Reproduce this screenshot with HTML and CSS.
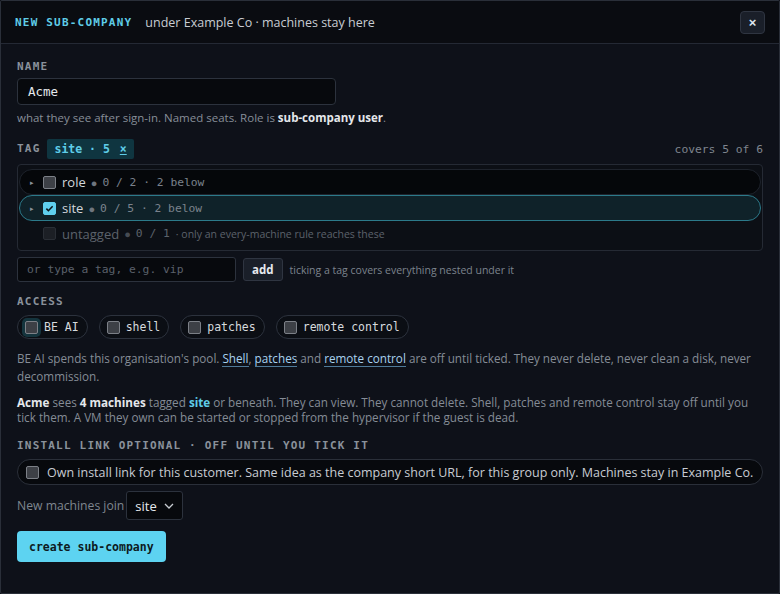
FILE: index.html
```html
<!DOCTYPE html>
<html lang="en">
<head>
  <meta charset="UTF-8">
  <title>New sub-company</title>
  <link rel="stylesheet" href="styles.css">
</head>
<body>
  <div class="modal">
    <div class="modal-head">
      <span class="modal-title">NEW SUB-COMPANY</span>
      <span class="modal-sub">under Example Co · machines stay here</span>
      <button class="close-btn">×</button>
    </div>

    <div class="modal-body">
      <div class="label">NAME</div>
      <div class="text-input mono">Acme</div>
      <div class="help">what they see after sign-in. Named seats. Role is <b>sub-company user</b>.</div>

      <div class="tag-row">
        <span class="label">TAG</span>
        <span class="tag-chip">site · 5 <u>×</u></span>
        <span class="covers">covers 5 of 6</span>
      </div>

      <div class="tree">
        <div class="tree-row">
          <span class="caret">▸</span>
          <span class="box"></span>
          <span class="tree-name">role</span>
          <span class="dot">●</span>
          <span class="count">0 / 2 · 2 below</span>
        </div>
        <div class="tree-row active">
          <span class="caret">▸</span>
          <span class="box checked"><svg viewBox="0 0 14 14" width="13" height="13"><path d="M3 7.2l2.6 2.6L11 4.2" fill="none" stroke="#0b1418" stroke-width="2"/></svg></span>
          <span class="tree-name">site</span>
          <span class="dot">●</span>
          <span class="count">0 / 5 · 2 below</span>
        </div>
        <div class="tree-row dim">
          <span class="caret"></span>
          <span class="box off"></span>
          <span class="tree-name">untagged</span>
          <span class="dot">●</span>
          <span class="count">0 / 1</span>
          <span class="note">· only an every-machine rule reaches these</span>
        </div>
      </div>

      <div class="add-row">
        <div class="tag-input mono">or type a tag, e.g. vip</div>
        <button class="add-btn">add</button>
        <span class="add-help">ticking a tag covers everything nested under it</span>
      </div>

      <div class="label access-label">ACCESS</div>
      <div class="access">
        <span class="pill"><span class="box focus"></span>BE AI</span>
        <span class="pill"><span class="box"></span>shell</span>
        <span class="pill"><span class="box"></span>patches</span>
        <span class="pill"><span class="box"></span>remote control</span>
      </div>

      <p class="para first">BE AI spends this organisation's pool. <a>Shell</a>, <a>patches</a> and <a>remote control</a> are off until ticked. They never delete, never clean a disk, never decommission.</p>
      <p class="para second"><b>Acme</b> sees <b>4 machines</b> tagged <span class="hl">site</span> or beneath. They can view. They cannot delete. Shell, patches and remote control stay off until you tick them. A VM they own can be started or stopped from the hypervisor if the guest is dead.</p>

      <div class="label install-label">INSTALL LINK OPTIONAL · OFF UNTIL YOU TICK IT</div>
      <div class="install">
        <span class="box"></span>
        Own install link for this customer. Same idea as the company short URL, for this group only. Machines stay in Example Co.
      </div>

      <div class="join">
        <span>New machines join</span>
        <span class="select">site <svg viewBox="0 0 10 6" width="10" height="6"><path d="M1 1l4 4 4-4" fill="none" stroke="#c8ccd2" stroke-width="1.3"/></svg></span>
      </div>

      <button class="create-btn">create sub-company</button>
    </div>
  </div>
</body>
</html>
```

FILE: styles.css
```css
body {
  margin: 0;
  background-color: #0e1118;
  font-family: "Open Sans", "Noto Sans", sans-serif;
  color: #c9cdd3;
}

.mono {
  font-family: "DejaVu Sans Mono", "Liberation Mono", monospace;
}

.modal {
  width: 780px;
  height: 594px;
  box-sizing: border-box;
  border: 1px solid #2a2f39;
  border-radius: 2px;
  background-color: #0e1119;
  overflow: hidden;
}

.modal-head {
  display: flex;
  align-items: center;
  height: 42px;
  padding: 0 14px;
  background-color: #0a0c11;
  border-bottom: 1px solid #242934;
}

.modal-title {
  font-family: "DejaVu Sans Mono", monospace;
  font-weight: bold;
  font-size: 11px;
  letter-spacing: 1.2px;
  color: #5fcde8;
}

.modal-sub {
  margin-left: 13px;
  font-size: 12.5px;
  color: #c8ccd3;
}

.close-btn {
  margin-left: auto;
  width: 25px;
  height: 23px;
  padding: 0;
  background-color: #1a1f29;
  border: 1px solid #2f3541;
  border-radius: 4px;
  color: #dfe6ee;
  font-size: 13px;
  font-weight: bold;
  line-height: 1;
}

.modal-body {
  padding: 16px 16px;
}

.label {
  font-family: "DejaVu Sans Mono", monospace;
  font-weight: bold;
  font-size: 11px;
  line-height: 14px;
  letter-spacing: 1.2px;
  color: #8a919b;
}

.text-input {
  margin-top: 4px;
  width: 319px;
  height: 27px;
  box-sizing: border-box;
  padding: 0 10px;
  line-height: 25px;
  font-size: 12.5px;
  color: #e6e9ee;
  background-color: #07090d;
  border: 1px solid #2c323d;
  border-radius: 4px;
}

.help {
  margin-top: 5px;
  font-size: 11.5px;
  line-height: 16px;
  color: #878e98;
}

.help b {
  color: #e4e7eb;
}

.tag-row {
  display: flex;
  align-items: center;
  margin-top: 13px;
  height: 20px;
}

.tag-chip {
  margin-left: 7px;
  height: 20px;
  padding: 0 7px;
  line-height: 20px;
  background-color: #0f3540;
  border-radius: 2px;
  font-family: "DejaVu Sans Mono", monospace;
  font-weight: bold;
  font-size: 11.5px;
  color: #5fcde8;
}

.tag-chip u {
  margin-left: 3px;
}

.covers {
  margin-left: auto;
  font-family: "DejaVu Sans Mono", monospace;
  font-size: 11.3px;
  color: #7f858e;
}

.tree {
  margin-top: 5px;
  padding: 4px 1px;
  background-color: #0c0f15;
  border: 1px solid #252a34;
  border-radius: 4px;
}

.tree-row {
  display: flex;
  align-items: center;
  height: 26px;
  box-sizing: border-box;
  padding-left: 10px;
  border: 1px solid #1e232c;
  border-radius: 13px;
  background-color: #05070a;
}

.tree-row.active {
  background-color: #0f2229;
  border-color: #2c7a8a;
}

.tree-row.dim {
  height: 25px;
  border-color: transparent;
  background: none;
}

.caret {
  width: 13px;
  font-size: 7px;
  color: #8b929b;
}

.box {
  display: inline-flex;
  align-items: center;
  justify-content: center;
  width: 13px;
  height: 13px;
  box-sizing: border-box;
  background-color: #3d4046;
  border: 1px solid #7c8087;
  border-radius: 2px;
  flex-shrink: 0;
}

.box.checked {
  background-color: #5fcfee;
  border-color: #5fcfee;
}

.box.off {
  background-color: #1c1f25;
  border-color: #2a2e35;
}

.box.focus {
  box-shadow: 0 0 0 3px #14343d;
}

.tree-name {
  margin-left: 6px;
  font-size: 13px;
  color: #d3d7dc;
}

.dot {
  margin-left: 5px;
  font-size: 11px;
  color: #6f757e;
}

.count {
  margin-left: 5px;
  font-family: "DejaVu Sans Mono", monospace;
  font-size: 11.3px;
  color: #7b828c;
}

.dim .tree-name,
.dim .count {
  color: #5c626b;
}

.dim .dot {
  color: #464b53;
}

.note {
  margin-left: 6px;
  font-size: 10.5px;
  color: #5c626b;
}

.add-row {
  display: flex;
  align-items: center;
  margin-top: 6px;
}

.tag-input {
  width: 219px;
  height: 25px;
  box-sizing: border-box;
  padding: 0 9px;
  line-height: 23px;
  font-size: 11.3px;
  color: #5a606a;
  background-color: #07090d;
  border: 1px solid #2c323d;
  border-radius: 3px;
}

.add-btn {
  margin-left: 7px;
  height: 23px;
  padding: 0 8px;
  background-color: #1a1f29;
  border: 1px solid #2f3541;
  border-radius: 3px;
  font-family: "Open Sans", sans-serif;
  font-weight: bold;
  font-size: 11.5px;
  color: #e6e9ee;
}

.add-help {
  margin-left: 7px;
  font-size: 10.5px;
  color: #7d848e;
}

.access-label {
  margin-top: 13px;
}

.access {
  display: flex;
  gap: 11px;
  margin-top: 6px;
}

.pill {
  display: inline-flex;
  align-items: center;
  gap: 6px;
  height: 24px;
  box-sizing: border-box;
  padding: 0 8px 0 7px;
  border: 1px solid #2c323d;
  border-radius: 12px;
  background-color: #0b0e14;
  font-family: "DejaVu Sans Mono", monospace;
  font-size: 11.5px;
  color: #d6dade;
}

.para {
  margin: 0;
  font-size: 11.7px;
  color: #858c96;
}

.para.first {
  margin-top: 10px;
  line-height: 18px;
}

.para.second {
  margin-top: 10px;
  line-height: 15px;
}

.para a {
  color: #a9d2ef;
  border-bottom: 1px solid #4f7a99;
}

.para b {
  color: #e4e7eb;
}

.hl {
  color: #5fcde8;
  font-weight: bold;
}

.install-label {
  margin-top: 14px;
}

.install {
  display: flex;
  align-items: center;
  gap: 8px;
  margin-top: 6px;
  height: 26px;
  box-sizing: border-box;
  padding-left: 8px;
  border: 1px solid #2a2f39;
  border-radius: 13px;
  background-color: #07090d;
  font-size: 12.5px;
  color: #c8ccd3;
}

.join {
  display: flex;
  align-items: center;
  gap: 2px;
  margin-top: 6px;
  font-size: 12.2px;
  color: #7f868f;
}

.select {
  display: inline-flex;
  align-items: center;
  gap: 7px;
  height: 29px;
  box-sizing: border-box;
  padding: 0 8px;
  background-color: #07090d;
  border: 1px solid #2c323d;
  border-radius: 3px;
  font-size: 13px;
  color: #e6e9ee;
}

.create-btn {
  margin-top: 11px;
  height: 31px;
  padding: 0 12px;
  background-color: #5dd3f1;
  border: none;
  border-radius: 4px;
  font-family: "DejaVu Sans Mono", monospace;
  font-weight: bold;
  font-size: 11.5px;
  color: #0d1a22;
}
```
